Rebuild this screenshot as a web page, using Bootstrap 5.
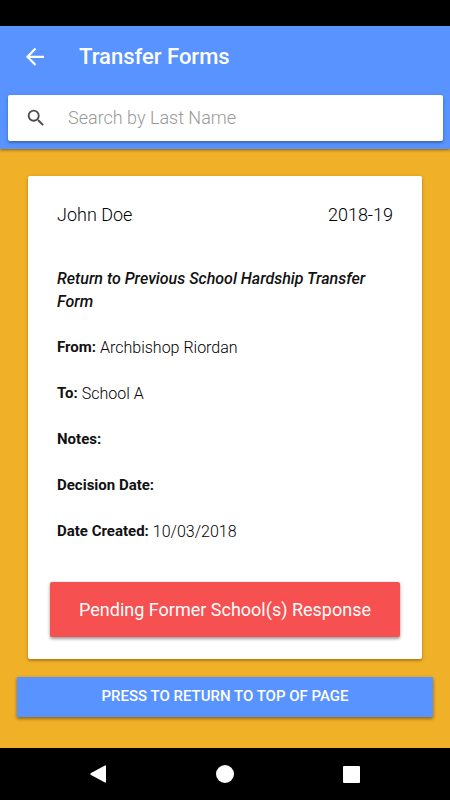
<!DOCTYPE html>
<html lang="en">
<head>
<meta charset="utf-8">
<meta name="viewport" content="width=device-width, initial-scale=1">
<title>Transfer Forms</title>
<link href="https://cdn.jsdelivr.net/npm/bootstrap@5.3.0/dist/css/bootstrap.min.css" rel="stylesheet">
<style>
  body { font-family: Roboto, "Liberation Sans", sans-serif; background: #f0b027; color: #111; }
  .status-strip { height: 26px; background: #000; }
  .app-header { background: #5893ff; padding: 0 7px 8px 8px; box-shadow: 0 1px 3px rgba(0,0,0,.45); }
  .app-bar { height: 62px; padding-left: 17px; gap: 34px; }
  .app-title { font-size: 22px; line-height: 28px; font-weight: 500; }
  .search-box { height: 46px; margin-top: 7px; padding-left: 17px; gap: 21px; border-radius: 2px; box-shadow: 0 2px 2px rgba(0,0,0,.2), 0 1px 4px rgba(0,0,0,.15); }
  .search-box input { font-size: 18px; line-height: 24px; font-weight: 300; color: #111; outline: 0; }
  .search-box input::placeholder { color: #999; opacity: 1; }
  .app-main { padding: 27px 17px 31px; }
  .form-card { margin: 0 11px 18px; padding: 26px 22px 22px; border-radius: 2px; box-shadow: 0 2px 2px rgba(0,0,0,.2), 0 1px 4px rgba(0,0,0,.15); }
  .card-top { font-size: 18px; line-height: 26px; font-weight: 300; color: #000; padding: 0 7px; margin-bottom: 39px; }
  .details { font-size: 16px; line-height: 23px; padding: 0 7px; margin-bottom: 39px; gap: 23px; }
  .details h2 { font-size: 16px; line-height: 23px; font-weight: 500; font-style: italic; }
  .details dl { gap: 23px; }
  .details dt { font-size: 15px; font-weight: 700; }
  .details dd { font-weight: 300; color: #000; }
  .action { border: 0; color: #fff; box-shadow: 0 2px 3px rgba(0,0,0,.3), 0 1px 4px rgba(0,0,0,.15); }
  .action-pending { min-height: 55px; background: #f75050; border-radius: 2px; font-size: 18px; line-height: 24px; }
  .action-top { min-height: 40px; padding-bottom: 3px; background: #5893ff; font-size: 15px; line-height: 20px; font-weight: 500; }
  .system-nav { height: 52px; background: #000; padding: 0 36px; }
</style>
<script src="https://cdn.jsdelivr.net/npm/bootstrap@5.3.0/dist/js/bootstrap.bundle.min.js" defer></script>
</head>
<body class="d-flex flex-column min-vh-100">
<div class="status-strip"></div>
<header class="app-header">
  <div class="app-bar d-flex align-items-center text-white">
    <button type="button" class="btn p-0 border-0 d-flex text-white" aria-label="Back">
      <svg width="20" height="20" viewBox="0 0 20 20" fill="none" stroke="currentColor" stroke-width="2.200"><path d="M10.500 1.500 2.500 9.800l8 8.300M2 9.800h17"/></svg>
    </button>
    <h1 class="app-title mb-0">Transfer Forms</h1>
  </div>
  <label class="search-box d-flex align-items-center bg-white">
    <svg width="22" height="22" viewBox="0 0 24 24" fill="#4c4c4c" aria-hidden="true"><path d="M15.500 14h-.79l-.28-.27A6.470 6.470 0 0 0 16 9.500 6.500 6.500 0 1 0 9.500 16c1.610 0 3.090-.59 4.230-1.570l.27.28v.79l5 4.990L20.490 19l-4.990-5zm-6 0C7.010 14 5 11.990 5 9.500S7.010 5 9.500 5 14 7.010 14 9.500 11.990 14 9.500 14z"/></svg>
    <input type="search" class="border-0 p-0 flex-grow-1 bg-transparent" placeholder="Search by Last Name" aria-label="Search by Last Name">
  </label>
</header>
<main class="app-main flex-grow-1 d-flex flex-column">
  <article class="form-card bg-white d-flex flex-column">
    <div class="card-top d-flex justify-content-between">
      <span>John Doe</span><span>2018-19</span>
    </div>
    <div class="details d-flex flex-column">
      <h2 class="mb-0">Return to Previous School Hardship Transfer Form</h2>
      <dl class="mb-0 d-flex flex-column">
        <div class="d-flex gap-1"><dt>From:</dt><dd class="mb-0">Archbishop Riordan</dd></div>
        <div class="d-flex gap-1"><dt>To:</dt><dd class="mb-0">School A</dd></div>
        <div class="d-flex gap-1"><dt>Notes:</dt><dd class="mb-0"></dd></div>
        <div class="d-flex gap-1"><dt>Decision Date:</dt><dd class="mb-0"></dd></div>
        <div class="d-flex gap-1"><dt>Date Created:</dt><dd class="mb-0">10/03/2018</dd></div>
      </dl>
    </div>
    <button type="button" class="action action-pending w-100">Pending Former School(s) Response</button>
  </article>
  <button type="button" class="action action-top w-100 text-uppercase">Press to return to top of page</button>
</main>
<nav class="system-nav d-flex justify-content-around align-items-center" aria-label="System">
  <button type="button" class="btn p-0 border-0 d-flex text-white" aria-label="Back"><svg width="18" height="18" viewBox="0 0 18 18" fill="currentColor"><path d="M1 8 15 .4q1-.4 1 .7v15.800q0 1.100-1 .7L1 10q-1.400-1 0-2z"/></svg></button>
  <button type="button" class="btn p-0 border-0 d-flex text-white" aria-label="Home"><svg width="18" height="18" viewBox="0 0 18 18" fill="currentColor"><circle cx="9" cy="9" r="9"/></svg></button>
  <button type="button" class="btn p-0 border-0 d-flex text-white" aria-label="Recent apps"><svg width="18" height="18" viewBox="0 0 18 18" fill="currentColor"><rect x="1" y="1" width="17" height="17" rx="1"/></svg></button>
</nav>
</body>
</html>
